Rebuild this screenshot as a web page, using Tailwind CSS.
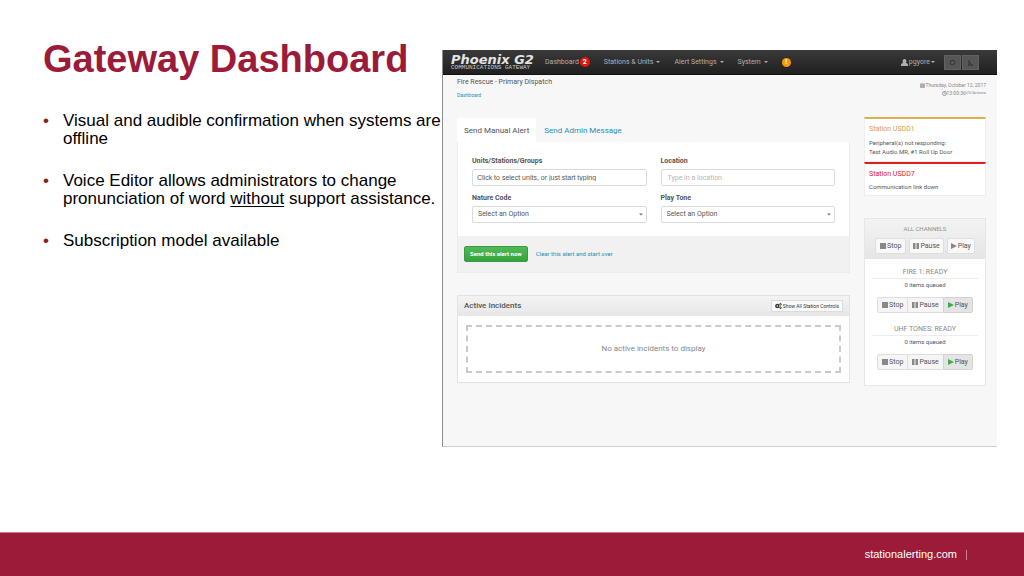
<!DOCTYPE html>
<html lang="en">
<head>
<meta charset="utf-8">
<meta name="viewport" content="width=device-width, initial-scale=1">
<title>Gateway Dashboard</title>
<script src="https://cdn.jsdelivr.net/npm/@tailwindcss/browser@4"></script>
</head>
<body class="bg-white">
<svg class="hidden" aria-hidden="true">
  <symbol id="stop" viewBox="0 0 6 6"><path d="M0 0h6v6H0z"/></symbol>
  <symbol id="pause" viewBox="0 0 6 6"><path d="M0 0h2.5v6H0zM3.5 0H6v6H3.5z"/></symbol>
  <symbol id="play" viewBox="0 0 6 6"><path d="M0 0l6 3-6 3z"/></symbol>
  <symbol id="caret" viewBox="0 0 4 2"><path d="M0 0h4L2 2z"/></symbol>
</svg>
<div class="flex min-h-screen flex-col font-['Liberation_Sans',Arial,sans-serif]">
  <main class="flex flex-1 items-start pr-[27px]">
    <section class="w-[442px] shrink-0 pt-9 pl-[43px]">
      <h1 class="text-[38px] leading-[46px] font-bold whitespace-nowrap text-[#9b1b38]">Gateway Dashboard</h1>
      <ul class="mt-[30px] flex flex-col gap-6 text-[17px] leading-[18px] text-black">
        <li class="flex"><span class="w-5 shrink-0 text-[#8a2010]">•</span><span>Visual and audible confirmation when systems are offline</span></li>
        <li class="flex"><span class="w-5 shrink-0 text-[#8a2010]">•</span><span>Voice Editor allows administrators to change pronunciation of word <u class="underline-offset-2">without</u> support assistance.</span></li>
        <li class="flex"><span class="w-5 shrink-0 text-[#8a2010]">•</span><span>Subscription model available</span></li>
      </ul>
    </section>

    <section class="mt-[50px] min-w-0 flex-1 border-b border-l border-b-[#cfcfcf] border-l-[#8c8c8c] bg-[#f7f7f7] pb-[60px] font-[Roboto,'Noto_Sans',sans-serif] text-[#555]">
      <header class="flex h-[25px] items-center border-b border-[#111] bg-linear-to-b from-[#3a3a3a] to-[#202020] pr-[18px] pl-2 text-[7px] leading-[9px] text-[#b0b0b0]">
        <div class="w-[94px] whitespace-nowrap">
          <div class="font-['DejaVu_Sans',sans-serif] text-[13px] leading-[11px] font-bold text-[#e4e4e4] italic">Phoenix G2</div>
          <div class="font-['Liberation_Mono',monospace] text-[6px] leading-[6px] text-[#c8c8c8]">COMMUNICATIONS GATEWAY</div>
        </div>
        <nav class="flex flex-1 items-center gap-[14px] whitespace-nowrap">
          <a href="#" class="flex items-center gap-px">Dashboard <span class="flex size-[10px] items-center justify-center rounded-full bg-[#e3150f] font-bold text-white">2</span></a>
          <a href="#" class="flex items-center gap-[3px]">Stations &amp; Units <svg class="h-[2px] w-1 fill-current"><use href="#caret"/></svg></a>
          <a href="#" class="flex items-center gap-[3px]">Alert Settings <svg class="h-[2px] w-1 fill-current"><use href="#caret"/></svg></a>
          <a href="#" class="flex items-center gap-[3px]">System <svg class="h-[2px] w-1 fill-current"><use href="#caret"/></svg></a>
          <a href="#" aria-label="Notices" class="flex size-[9px] items-center justify-center rounded-full bg-[#f79a10] font-bold text-white">!</a>
        </nav>
        <a href="#" class="mr-[9px] flex items-center gap-px"><svg class="size-[7px] fill-current" viewBox="0 0 7 7"><ellipse cx="3.5" cy="2.200" rx="1.900" ry="2.200"/><path d="M0 7V5.500Q.3 4.300 2 3.900h3Q6.700 4.300 7 5.500V7z"/></svg>pgyore<svg class="h-[2px] w-1 fill-current"><use href="#caret"/></svg></a>
        <div class="flex gap-px">
          <button aria-label="Screen" class="flex h-[15px] w-[17px] items-center justify-center border border-[#626262] bg-[#565656]"><svg class="size-[7px] fill-none stroke-[#333]" viewBox="0 0 7 7"><circle cx="3.500" cy="3.500" r="2.300"/></svg></button>
          <button aria-label="Sound" class="flex h-[15px] w-[17px] items-center justify-center border border-[#626262] bg-[#565656]"><svg class="size-[7px] fill-none stroke-[#333]" viewBox="0 0 7 7"><path d="M2 1v5M2 3l3 3M1 6h5"/></svg></button>
        </div>
      </header>

      <div class="flex justify-between pt-[3px] pr-[11px] pl-[14px]">
        <div>
          <h2 class="text-[7px] leading-[9px]">Fire Rescue - Primary Dispatch</h2>
          <a href="#" class="mt-1 block text-[5px] leading-[9px] text-[#2790b0]">Dashboard</a>
        </div>
        <div class="flex flex-col items-end pt-[3px] text-[5px] leading-[8px] text-[#888]">
          <div class="flex items-center"><svg class="size-[5px] fill-none stroke-current" viewBox="0 0 6 6"><path d="M.5 1h5v4.500h-5zM.5 2.500h5M.5 4h5M2 1v4.500M4 1v4.500" stroke-width=".7"/></svg>Thursday, October 12, 2017</div>
          <div class="flex items-center"><svg class="size-[5px] fill-none stroke-current" viewBox="0 0 6 6"><circle cx="3" cy="3" r="2.400"/><path d="M3 1.500V3h1.500" stroke-width=".7"/></svg>13:00:36 <span class="text-[4px]">US/Arizona</span></div>
        </div>
      </div>

      <div class="mt-[17px] flex items-start gap-[14px] pr-[11px] pl-[14px]">
        <div class="min-w-0 flex-1 pt-px">
          <div class="flex text-[8px] leading-[10px]">
            <button class="bg-white px-[7px] pt-2 pb-[6px]">Send Manual Alert</button>
            <button class="px-2 pt-2 pb-[6px] text-[#2790b0]">Send Admin Message</button>
          </div>
          <form class="border border-t-0 border-[#ececec]">
            <div class="grid grid-cols-2 gap-x-[14px] gap-y-2 bg-white px-[14px] pt-[15px] pb-[13px] text-[7px] leading-[9px]">
              <div><label for="units" class="block font-bold">Units/Stations/Groups</label><input id="units" value="Click to select units, or just start typing" class="mt-[3px] block h-[17px] w-full rounded-[2px] border border-[#dadada] px-1 font-['Liberation_Sans',sans-serif] leading-[11px]"></div>
              <div><label for="loc" class="block font-bold">Location</label><input id="loc" placeholder="Type in a location" class="mt-[3px] block h-[17px] w-full rounded-[2px] border border-[#dadada] px-[6px] placeholder:text-[#b5b5b5]"></div>
              <div><label for="nature" class="block font-bold">Nature Code</label><div class="relative mt-[3px]"><select id="nature" class="block h-[17px] w-full appearance-none rounded-[2px] border border-[#dadada] bg-white px-[5px]"><option>Select an Option</option></select><svg class="pointer-events-none absolute top-[7px] right-1 h-[3px] w-1 fill-[#777]"><use href="#caret"/></svg></div></div>
              <div><label for="tone" class="block font-bold">Play Tone</label><div class="relative mt-[3px]"><select id="tone" class="block h-[17px] w-full appearance-none rounded-[2px] border border-[#dadada] bg-white px-[5px]"><option>Select an Option</option></select><svg class="pointer-events-none absolute top-[7px] right-1 h-[3px] w-1 fill-[#777]"><use href="#caret"/></svg></div></div>
            </div>
            <div class="flex h-9 items-center gap-2 bg-[#f1f1f1] px-[6px] text-[6px] leading-[8px]">
              <button type="button" class="h-4 rounded-[2px] border border-[#3a9a40] bg-linear-to-b from-[#51b956] to-[#35a33c] px-[5px] font-bold text-white">Send this alert now</button>
              <a href="#" class="text-[#2790b0]">Clear this alert and start over</a>
            </div>
          </form>

          <section class="mt-[22px] border border-[#e2e2e2] bg-white">
            <div class="flex h-5 items-center justify-between bg-linear-to-b from-[#f3f3f3] to-[#e7e7e7] px-[6px]">
              <h3 class="text-[8px] leading-[10px] font-medium">Active Incidents</h3>
              <button class="flex h-3 items-center gap-px border border-[#dcdcdc] bg-[#fafafa] px-[3px] text-[5px] leading-[8px] text-[#333]"><svg class="h-[6px] w-[7px] fill-none stroke-[#333]" viewBox="0 0 7 6"><circle cx="2.300" cy="3" r="1.500" stroke-width="1.400"/><circle cx="5.500" cy="1.300" r=".8"/><circle cx="5.500" cy="4.700" r=".8"/></svg>Show All Station Controls</button>
            </div>
            <div class="px-2 py-[9px]"><div class="flex h-12 items-center justify-center border-2 border-dashed border-[#cacaca] text-[8px] leading-[10px] text-[#888]">No active incidents to display</div></div>
          </section>
        </div>

        <aside class="w-[122px] shrink-0">
          <div class="h-[45px] border border-t-2 border-[#eee] border-t-[#dcae4e] bg-white px-1 pt-[5px] text-[6px] leading-[9px]">
            <h3 class="mb-1 text-[7px] leading-[10px] text-[#dc9a35]">Station USDD1</h3>
            <p>Peripheral(s) not responding:</p><p>Test Audio MR, #1 Roll Up Door</p>
          </div>
          <div class="h-[34px] border border-t-2 border-[#eee] border-t-[#dc2020] bg-white px-1 pt-[5px] text-[6px] leading-[9px]">
            <h3 class="mb-[3px] text-[7px] leading-[10px] text-[#dc2020]">Station USDD7</h3>
            <p>Communication link down</p>
          </div>
          <div class="mt-[22px] border border-[#e6e6e6] bg-white pb-[15px] text-center text-[7px] leading-[9px]">
            <div class="bg-linear-to-b from-[#f3f3f3] to-[#e5e5e5] pt-[5px] pb-[5px]">
              <h3 class="text-[6px] text-[#909090]">ALL CHANNELS</h3>
              <div class="mt-[5px] flex justify-center gap-[3px]">
                <button class="flex h-4 items-center gap-px rounded-[2px] border border-[#dedede] bg-[#f8f8f8] px-1"><svg class="size-[6px] fill-[#888]"><use href="#stop"/></svg>Stop</button>
                <button class="flex h-4 items-center gap-px rounded-[2px] border border-[#dedede] bg-[#f8f8f8] px-[3px]"><svg class="size-[6px] fill-[#888]"><use href="#pause"/></svg>Pause</button>
                <button class="flex h-4 items-center gap-px rounded-[2px] border border-[#dedede] bg-[#f8f8f8] px-[3px]"><svg class="size-[6px] fill-[#888]"><use href="#play"/></svg>Play</button>
              </div>
            </div>
            <div class="px-[7px] pt-[9px]">
              <h3 class="border-b border-[#ededed] pb-px text-[#888]">FIRE 1: READY</h3>
              <p class="mt-[2px] text-[6px] leading-[8px]">0 items queued</p>
              <div class="mt-2 flex justify-center">
                <button class="flex h-4 items-center gap-px rounded-l-[2px] border border-[#dedede] bg-[#f5f5f5] px-1"><svg class="size-[6px] fill-[#888]"><use href="#stop"/></svg>Stop</button>
                <button class="flex h-4 items-center gap-px border-y border-[#dedede] bg-[#f5f5f5] px-1"><svg class="size-[6px] fill-[#888]"><use href="#pause"/></svg>Pause</button>
                <button class="flex h-4 items-center gap-px rounded-r-[2px] border border-[#d2d2d2] bg-[#e4e4e4] px-1"><svg class="size-[6px] fill-[#3fae49]"><use href="#play"/></svg>Play</button>
              </div>
            </div>
            <div class="px-[7px] pt-3">
              <h3 class="border-b border-[#ededed] pb-px text-[#888]">UHF TONES: READY</h3>
              <p class="mt-[2px] text-[6px] leading-[8px]">0 items queued</p>
              <div class="mt-2 flex justify-center">
                <button class="flex h-4 items-center gap-px rounded-l-[2px] border border-[#dedede] bg-[#f5f5f5] px-1"><svg class="size-[6px] fill-[#888]"><use href="#stop"/></svg>Stop</button>
                <button class="flex h-4 items-center gap-px border-y border-[#dedede] bg-[#f5f5f5] px-1"><svg class="size-[6px] fill-[#888]"><use href="#pause"/></svg>Pause</button>
                <button class="flex h-4 items-center gap-px rounded-r-[2px] border border-[#d2d2d2] bg-[#e4e4e4] px-1"><svg class="size-[6px] fill-[#3fae49]"><use href="#play"/></svg>Play</button>
              </div>
            </div>
          </div>
        </aside>
      </div>
    </section>
  </main>
  <footer class="flex h-11 items-center justify-end gap-[9px] border-t border-[#c87f8f] bg-[#9b1b38] pr-[57px] text-[11px] text-white">
    <a href="#">stationalerting.com</a><span class="h-[10px] w-px bg-[#cf8493]"></span>
  </footer>
</div>
</body>
</html>
